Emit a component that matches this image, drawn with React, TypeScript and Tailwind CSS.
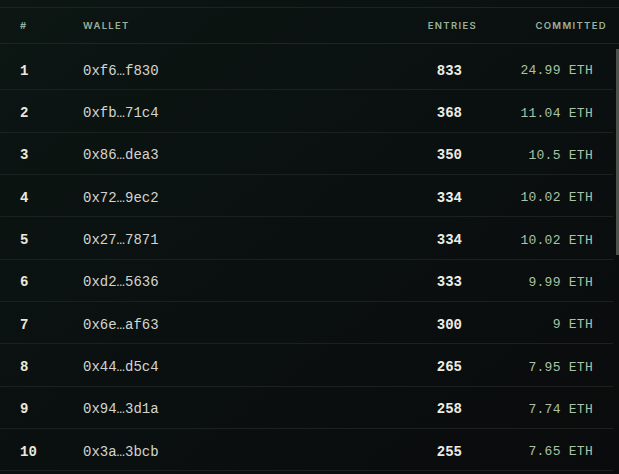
import React from "react";

const rows = [
  { wallet: "0xf6…f830", entries: 833, eth: "24.99" },
  { wallet: "0xfb…71c4", entries: 368, eth: "11.04" },
  { wallet: "0x86…dea3", entries: 350, eth: "10.5" },
  { wallet: "0x72…9ec2", entries: 334, eth: "10.02" },
  { wallet: "0x27…7871", entries: 334, eth: "10.02" },
  { wallet: "0xd2…5636", entries: 333, eth: "9.99" },
  { wallet: "0x6e…af63", entries: 300, eth: "9" },
  { wallet: "0x44…d5c4", entries: 265, eth: "7.95" },
  { wallet: "0x94…3d1a", entries: 258, eth: "7.74" },
  { wallet: "0x3a…3bcb", entries: 255, eth: "7.65" },
  { wallet: "0x1c…8e20", entries: 240, eth: "7.2" },
  { wallet: "0x5b…a914", entries: 221, eth: "6.63" },
];

const mono = "font-['Liberation_Mono','DejaVu_Sans_Mono',monospace]";

export default function App() {
  return (
    <div className="h-[474px] w-[619px] overflow-hidden bg-linear-to-br from-[#0c1613] via-[#0a1010] to-[#0a0b0c] pt-[7px]">
      <div className="flex h-full flex-col border-t border-[#1a2420]">
        <div className="grid h-[36px] shrink-0 grid-cols-[63px_1fr_110px_130px] items-center border-b border-[#1c2622] pl-5 pr-3 pt-[2px] font-['Inter','Liberation_Sans',sans-serif] text-[9.5px] font-semibold tracking-[0.14em] text-[#9bb29a]">
          <span>#</span>
          <span>WALLET</span>
          <span className="text-right">ENTRIES</span>
          <span className="text-right">COMMITTED</span>
        </div>
        <div className="relative min-h-0 flex-1 overflow-hidden pt-[4px]">
          <div className="mr-[6px]">
            {rows.map((r, i) => (
              <div
                key={i}
                className={`grid h-[42.33px] grid-cols-[63px_1fr_110px_131px] items-center border-b border-[#1a211f] pl-5 pr-5 pt-[5px] ${mono}`}
              >
                <span className="text-[14px] font-bold text-[#ece8da]">{i + 1}</span>
                <span className="text-[14px] text-[#d4d4ce]">{r.wallet}</span>
                <span className="text-right text-[14px] font-bold text-[#ececE4]">{r.entries}</span>
                <span className="text-right text-[13px] tracking-[0.02em] text-[#a9c3a6]">{r.eth} ETH</span>
              </div>
            ))}
          </div>
          <div className="absolute right-0 top-[5px] h-[206px] w-[3px] bg-[#4d524d]" />
        </div>
      </div>
    </div>
  );
}
